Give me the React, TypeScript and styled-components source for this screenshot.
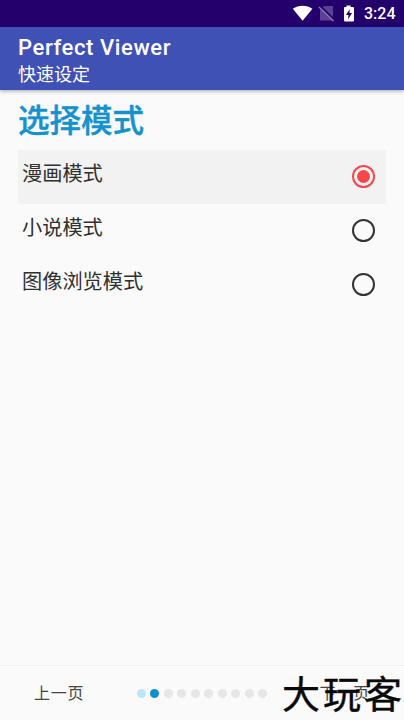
import { useState } from "react";
import styled, { createGlobalStyle } from "styled-components";

const GlobalStyle = createGlobalStyle`
  * {
    box-sizing: border-box;
  }
  body {
    margin: 0;
    background-color: #fafafa;
    font-family: Roboto, "Noto Sans CJK SC", sans-serif;
  }
`;

const Screen = styled.div`
  position: relative;
  display: flex;
  flex-direction: column;
  height: 720px;
  overflow: hidden;
  background-color: #fafafa;
`;

const StatusBar = styled.div`
  display: flex;
  flex: none;
  justify-content: flex-end;
  align-items: center;
  height: 27px;
  padding-right: 9px;
  background-color: #23006b;
  color: #fff;
`;

const Clock = styled.span`
  width: 31px;
  margin-left: 8px;
  font-size: 16px;
  font-weight: 500;
  line-height: 29px;
  white-space: nowrap;
`;

const AppBar = styled.header`
  flex: none;
  height: 63px;
  padding: 8px 18px 0;
  background-color: #3f51b5;
  box-shadow: 0 1px 4px rgba(0, 0, 0, 0.35);
  color: #fff;
`;

const AppTitle = styled.h1`
  margin: 0;
  font-size: 22px;
  font-weight: 500;
  line-height: 26px;
  letter-spacing: 0.6px;
`;

const AppSubtitle = styled.div`
  font-size: 18px;
  line-height: 27px;
`;

const Content = styled.main`
  flex: 1;
  padding: 9px 18px 0;
`;

const Heading = styled.h2`
  margin: 0 0 5px;
  color: #1592cd;
  font-size: 31.5px;
  font-weight: 500;
  line-height: 46px;
  -webkit-text-stroke: 0.4px #1592cd;
`;

const Option = styled.button<{ $selected: boolean }>`
  display: flex;
  justify-content: space-between;
  align-items: center;
  width: 100%;
  height: 54px;
  padding: 0 11px 0 4px;
  border: 0;
  background-color: ${({ $selected }) => ($selected ? "#f2f2f2" : "transparent")};
  color: #303030;
  font: inherit;
  font-size: 20.2px;
  line-height: 30px;
`;

const OptionLabel = styled.span`
  padding-bottom: 7px;
`;

const Radio = styled.span<{ $selected: boolean }>`
  display: flex;
  justify-content: center;
  align-items: center;
  width: 23px;
  height: 23px;
  margin-bottom: 1px;
  border: 2px solid ${({ $selected }) => ($selected ? "#f7474a" : "#333")};
  border-radius: 50%;

  &::after {
    content: "";
    width: 13px;
    height: 13px;
    border-radius: 50%;
    background-color: ${({ $selected }) => ($selected ? "#f7474a" : "transparent")};
  }
`;

const Footer = styled.footer`
  display: flex;
  flex: none;
  justify-content: space-between;
  align-items: center;
  height: 55px;
  padding: 0 34px;
  border-top: 1px solid #f0f0f0;
`;

const PageButton = styled.button`
  padding: 2px 0 0;
  border: 0;
  background: none;
  color: #444;
  font: inherit;
  font-size: 16px;
  line-height: 24px;
  letter-spacing: 0.8px;
`;

const Dots = styled.div`
  display: flex;
  gap: 4.5px;
`;

const Dot = styled.span<{ $color: string }>`
  width: 9px;
  height: 9px;
  border-radius: 50%;
  background-color: ${({ $color }) => $color};
`;

const Watermark = styled.div`
  position: absolute;
  right: -1px;
  bottom: 3px;
  color: #090909;
  font-size: 38px;
  font-weight: 400;
  line-height: 44px;
  letter-spacing: 3px;
  -webkit-text-stroke: 0.4px #090909;
  pointer-events: none;
`;

const modes = ["漫画模式", "小说模式", "图像浏览模式"];
const pageCount = 10;
const currentPage = 1;

function dotColor(page: number) {
  if (page === currentPage) return "#0b91cc";
  return page < currentPage ? "#bce6f7" : "#e6e6e6";
}

function StatusIcons() {
  return (
    <svg width="64" height="27" viewBox="0 0 64 27">
      <path d="M0.8 8.8C6.5 4.6 14.8 4.6 20.4 8.8L10.6 20.8Z" fill="#fff" />
      <path d="M32 6H41V20.5H28V10Z" fill="#5a4191" />
      <path d="M28.5 6.5L43 20.5" stroke="#23006b" strokeWidth="2" />
      <path d="M27 7L41.5 21" stroke="#8b77b3" strokeWidth="1.4" />
      <path
        d="M54.5 5.5H58.5V7H61Q62 7 62 8V20.5Q62 21.5 61 21.5H53Q52 21.5 52 20.5V8Q52 7 53 7H54.5Z"
        fill="#fff"
      />
      <path d="M57.8 9L54 15H56.5L56 19.5L60 13H57.4Z" fill="#23006b" />
    </svg>
  );
}

function App() {
  const [mode, setMode] = useState(0);

  return (
    <>
      <GlobalStyle />
      <Screen>
        <StatusBar>
          <StatusIcons />
          <Clock>3:24</Clock>
        </StatusBar>
        <AppBar>
          <AppTitle>Perfect Viewer</AppTitle>
          <AppSubtitle>快速设定</AppSubtitle>
        </AppBar>
        <Content>
          <Heading>选择模式</Heading>
          {modes.map((name, i) => (
            <Option key={name} $selected={i === mode} onClick={() => setMode(i)}>
              <OptionLabel>{name}</OptionLabel>
              <Radio $selected={i === mode} />
            </Option>
          ))}
        </Content>
        <Footer>
          <PageButton>上一页</PageButton>
          <Dots>
            {Array.from({ length: pageCount }, (_, page) => (
              <Dot key={page} $color={dotColor(page)} />
            ))}
          </Dots>
          <PageButton>下一页</PageButton>
        </Footer>
        <Watermark>大玩客</Watermark>
      </Screen>
    </>
  );
}

export default App;
